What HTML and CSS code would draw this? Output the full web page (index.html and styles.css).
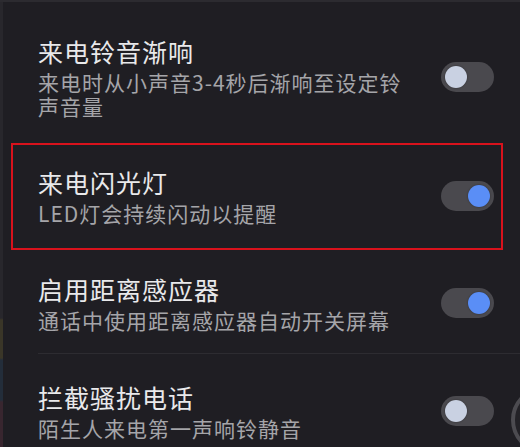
FILE: index.html
```html
<!DOCTYPE html>
<html lang="zh-CN">
<head>
<meta charset="utf-8">
<title>设置</title>
<link rel="stylesheet" href="styles.css">
</head>
<body>
<div class="screen">
  <div class="list">
    <div class="row first">
      <div class="text">
        <div class="title">来电铃音渐响</div>
        <div class="sub wrap">来电时从小声音3-4秒后渐响至设定铃声音量</div>
      </div>
      <div class="switch"><span class="knob"></span></div>
    </div>
    <div class="row highlighted">
      <div class="text">
        <div class="title">来电闪光灯</div>
        <div class="sub">LED灯会持续闪动以提醒</div>
      </div>
      <div class="switch on"><span class="knob"></span></div>
    </div>
    <div class="row divided">
      <div class="text">
        <div class="title">启用距离感应器</div>
        <div class="sub">通话中使用距离感应器自动开关屏幕</div>
      </div>
      <div class="switch on"><span class="knob"></span></div>
    </div>
    <div class="row last">
      <div class="text">
        <div class="title">拦截骚扰电话</div>
        <div class="sub">陌生人来电第一声响铃静音</div>
      </div>
      <div class="switch"><span class="knob"></span></div>
    </div>
  </div>
  <div class="float-ring"></div>
</div>
</body>
</html>
```
FILE: styles.css
```css
html, body {
  margin: 0;
  padding: 0;
  background: #1f1e23;
}
body {
  width: 520px;
  height: 447px;
  overflow: hidden;
  font-family: "Noto Sans CJK SC", "Noto Sans", sans-serif;
}
.screen {
  position: relative;
  width: 520px;
  height: 447px;
  overflow: hidden;
  box-sizing: border-box;
  border-top: 2px solid #2c2b30;
  background:
    linear-gradient(to bottom, #28272c 0, #28272c 316px, #3a3628 318px, #3a3628 356px, #232d3a 358px, #232d3a 398px, #38262f 400px, #38262f 447px) no-repeat 0 0 / 3px 100%,
    #1f1e23;
}
.list {
  padding-top: 8px;
}
.row {
  position: relative;
  display: flex;
  align-items: center;
  justify-content: space-between;
  padding: 25px 26px 24px 38px;
}
.row.first {
  padding-bottom: 23px;
}
.row.divided {
  padding-top: 24px;
  padding-bottom: 21px;
  border-bottom: 1px solid #2d2c31;
  margin-left: 38px;
  padding-left: 0;
}
.row.last {
  padding-top: 27px;
}
.highlighted::after {
  content: "";
  position: absolute;
  left: 11px;
  right: 17px;
  top: 2px;
  bottom: -1px;
  border: 2px solid #d8121c;
  pointer-events: none;
}
.text {
  display: flex;
  flex-direction: column;
}
.title {
  font-size: 25px;
  line-height: 32px;
  letter-spacing: 1px;
  color: #e9e9eb;
}
.sub {
  margin-top: 3px;
  font-size: 21px;
  line-height: 24px;
  letter-spacing: 1px;
  color: #a5a5a9;
}
.sub.wrap {
  max-width: 376px;
}
.switch {
  flex: none;
  width: 53px;
  height: 30px;
  border-radius: 15px;
  background: #4a494e;
  display: flex;
  align-items: center;
  padding: 0 4px;
  box-sizing: border-box;
}
.knob {
  width: 22px;
  height: 22px;
  border-radius: 50%;
  background: #c9d1e2;
  box-shadow: 0 0 2px rgba(0,0,0,0.4);
}
.switch.on {
  justify-content: flex-end;
}
.switch.on .knob {
  background: #5a8ef6;
}
.float-ring {
  position: absolute;
  left: 511px;
  top: 384px;
  width: 68px;
  height: 68px;
  box-sizing: border-box;
  border-radius: 50%;
  border: 4px solid #4c4b50;
  background: #232227;
}
```
